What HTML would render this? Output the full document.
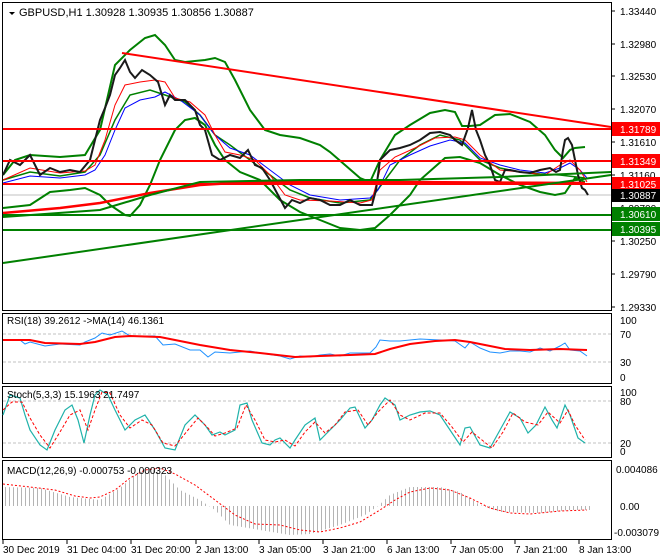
<!DOCTYPE html>
<html><head><meta charset="utf-8"><style>
body{margin:0;background:#fff;width:660px;height:560px;overflow:hidden}
svg{display:block;font-family:"Liberation Sans",sans-serif;font-size:10px}
</style></head><body>
<svg width="660" height="560" viewBox="0 0 660 560">
<defs>
<pattern id="hb" width="4" height="10" patternUnits="userSpaceOnUse"><rect x="1" y="0" width="1" height="10" fill="#b4b4b4"/></pattern>
</defs>
<rect width="660" height="560" fill="#fff"/>
<!-- frames -->
<g fill="none" stroke="#000" stroke-width="1">
<rect x="2.5" y="2.5" width="609" height="308"/>
<rect x="2.5" y="313.5" width="609" height="70"/>
<rect x="2.5" y="386.5" width="609" height="71"/>
<rect x="2.5" y="460.5" width="609" height="79"/>
</g>
<!-- main panel -->
<g>
<line x1="3" y1="195" x2="611" y2="195" stroke="#c0c0c0"/>
<!-- bollinger -->
<polyline fill="none" stroke="#008000" stroke-width="2" points="3,175 15,160 30,155 60,157 85,155 100,130 115,65 130,50 145,38 155,35 165,45 175,60 185,62 205,60 215,58 225,62 235,80 250,110 265,130 280,135 300,138 320,145 330,152 345,165 360,178 370,182 380,160 395,135 410,125 430,113 445,110 455,112 462,126 470,126 480,125 495,115 510,114 530,122 545,135 555,150 563,158 570,150 575,148 585,147"/>
<polyline fill="none" stroke="#008000" stroke-width="2" points="3,208 30,205 50,192 70,190 85,188 100,195 110,205 125,215 130,216 140,205 150,185 160,160 175,130 185,120 195,118 205,125 215,145 225,160 240,172 260,180 280,200 300,212 320,220 340,228 360,230 375,228 390,215 410,195 420,180 445,158 460,157 480,163 500,175 520,185 540,192 555,195 565,193 575,178 585,182"/>
<polyline fill="none" stroke="#008000" stroke-width="1.5" points="3,180 30,172 60,176 85,172 100,155 115,120 130,95 150,90 165,95 185,102 200,115 215,135 230,145 250,160 270,175 290,190 310,198 340,203 370,200 385,180 400,160 420,145 440,135 460,140 480,160 500,168 520,172 540,174 560,175 585,178"/>
<!-- MAs -->
<polyline fill="none" stroke="#0000ff" stroke-width="1" points="3,183 30,176 60,178 85,175 95,170 105,155 115,130 125,108 140,100 155,97 165,92 180,100 200,115 215,135 230,148 250,155 270,170 290,185 310,195 340,200 370,198 378,190 390,165 410,155 430,146 450,140 465,143 480,158 500,165 520,170 545,173 560,168 570,163 580,170 587,178"/>
<polyline fill="none" stroke="#ff0000" stroke-width="1" points="3,180 30,168 60,173 85,171 95,165 105,140 115,105 125,85 140,82 155,80 165,82 175,98 190,102 205,115 215,135 225,152 240,155 255,160 270,175 285,195 300,200 330,201 360,203 372,200 380,170 395,157 415,148 435,138 455,137 465,140 480,155 500,170 520,172 545,175 560,165 570,160 580,170 587,182"/>
<!-- price -->
<polyline fill="none" stroke="#1a1a1a" stroke-width="2" points="3,175 10,160 20,165 30,155 40,175 50,168 60,172 70,170 80,172 90,160 95,140 100,120 105,108 110,95 115,75 120,68 125,60 130,72 135,78 142,70 150,75 158,82 165,105 170,95 175,100 185,100 195,110 200,125 205,130 212,155 220,160 230,155 240,158 248,150 255,165 262,168 270,180 278,195 285,208 292,200 300,203 310,198 320,200 330,205 340,205 350,200 360,205 372,205 376,190 380,160 385,155 390,150 400,148 410,145 420,140 430,133 440,132 450,135 455,140 462,145 468,128 472,110 476,130 480,140 485,155 490,165 495,180 500,182 505,170 510,170 520,172 530,173 540,170 550,168 556,172 560,170 563,150 565,140 568,138 572,145 575,160 578,175 582,188 585,190 588,195"/>
<!-- lines -->
<line x1="122" y1="53" x2="611" y2="127" stroke="#ff0000" stroke-width="2"/>
<line x1="3" y1="129" x2="611" y2="129" stroke="#ff0000" stroke-width="2"/>
<line x1="3" y1="161" x2="611" y2="161" stroke="#ff0000" stroke-width="2"/>
<line x1="3" y1="184" x2="611" y2="184" stroke="#ff0000" stroke-width="2"/>
<polyline fill="none" stroke="#ff0000" stroke-width="2.5" points="3,213 60,208 100,203 150,193 200,185 250,182 400,182 585,183"/>
<polyline fill="none" stroke="#008000" stroke-width="2" points="3,217 100,210 150,195 200,182 300,180 400,180 500,177 611,172"/>
<line x1="3" y1="215" x2="611" y2="215" stroke="#008000" stroke-width="2"/>
<line x1="3" y1="230" x2="611" y2="230" stroke="#008000" stroke-width="2"/>
<line x1="3" y1="263" x2="611" y2="175" stroke="#008000" stroke-width="2"/>
<path d="M9 12l3 3 3-3z" fill="#000"/>
<text x="19" y="16" font-size="11">GBPUSD,H1  1.30928 1.30935 1.30856 1.30887</text>
</g>
<!-- price axis -->
<g font-size="10" fill="#000">
<g stroke="#000"><line x1="611" y1="11" x2="615" y2="11"/><line x1="611" y1="44" x2="615" y2="44"/><line x1="611" y1="76" x2="615" y2="76"/><line x1="611" y1="109" x2="615" y2="109"/><line x1="611" y1="142" x2="615" y2="142"/><line x1="611" y1="175" x2="615" y2="175"/><line x1="611" y1="241" x2="615" y2="241"/><line x1="611" y1="274" x2="615" y2="274"/><line x1="611" y1="307" x2="615" y2="307"/></g>
<text x="620" y="15">1.33440</text><text x="620" y="48">1.32980</text><text x="620" y="80">1.32530</text><text x="620" y="113">1.32070</text><text x="620" y="146">1.31610</text><text x="620" y="179">1.31160</text><text x="620" y="212">1.30700</text><text x="620" y="245">1.30250</text><text x="620" y="278">1.29790</text><text x="620" y="311">1.29330</text>
<rect x="612" y="122" width="48" height="14" fill="#ff0000"/><text x="620" y="133" fill="#fff">1.31789</text>
<rect x="612" y="154" width="48" height="14" fill="#ff0000"/><text x="620" y="165" fill="#fff">1.31349</text>
<rect x="612" y="177" width="48" height="13" fill="#ff0000"/><text x="620" y="188" fill="#fff">1.31025</text>
<rect x="612" y="189" width="48" height="13" fill="#000"/><text x="620" y="199" fill="#fff">1.30887</text>
<rect x="612" y="207" width="48" height="14" fill="#008000"/><text x="620" y="218" fill="#fff">1.30610</text>
<rect x="612" y="222" width="48" height="14" fill="#008000"/><text x="620" y="233" fill="#fff">1.30395</text>
</g>
<!-- RSI -->
<g>
<line x1="3" y1="334" x2="611" y2="334" stroke="#c0c0c0" stroke-dasharray="3,2"/>
<line x1="3" y1="362" x2="611" y2="362" stroke="#c0c0c0" stroke-dasharray="3,2"/>
<polyline fill="none" stroke="#1e90ff" stroke-width="1" points="3,340 20,340 25,344 30,342 45,346 60,344 80,345 85,342 95,338 102,333 110,335 122,331 130,336 140,336 155,336 163,345 175,344 190,350 200,350 208,357 215,352 230,353 250,351 260,353 280,356 290,359 300,356 310,357 320,355 330,354 340,356 350,353 370,353 376,347 380,340 390,341 400,341 410,340 420,339 440,340 455,341 465,348 470,342 480,348 490,352 500,353 510,351 520,351 530,352 540,348 550,351 560,346 565,343 570,350 580,351 587,356"/>
<polyline fill="none" stroke="#ff0000" stroke-width="2" points="3,340 30,340 45,343 80,344 95,342 115,337 130,336 160,337 175,340 200,345 230,350 260,353 295,357 320,356 350,355 375,354 390,349 410,344 435,341 455,340 470,342 485,345 505,349 530,350 560,349 587,350"/>
<text x="7" y="324" font-size="10">RSI(18) 39.2612  -&gt;MA(14) 46.1361</text>
<text x="620" y="324">100</text><text x="620" y="338">70</text><text x="620" y="366">30</text><text x="620" y="381">0</text>
</g>
<!-- Stoch -->
<g>
<line x1="3" y1="401" x2="611" y2="401" stroke="#c0c0c0" stroke-dasharray="3,2"/>
<line x1="3" y1="443" x2="611" y2="443" stroke="#c0c0c0" stroke-dasharray="3,2"/>
<polyline fill="none" stroke="#20b2aa" stroke-width="1.2" points="3,415 10,395 20,398 25,415 30,430 40,445 47,450 55,430 65,410 72,405 78,420 84,443 90,415 95,395 100,390 108,395 115,410 125,430 135,420 145,415 155,430 165,448 175,450 185,425 195,415 205,425 212,435 220,432 225,435 235,430 240,405 247,403 252,420 262,443 270,445 275,440 280,438 290,448 295,440 305,425 315,418 320,440 330,430 340,420 350,408 355,407 365,428 372,420 380,405 385,398 395,405 400,420 410,415 420,412 430,411 440,415 450,430 460,445 465,428 470,427 480,445 490,448 500,430 510,412 520,418 528,433 536,425 545,407 552,420 557,428 565,405 570,415 578,438 585,443"/>
<polyline fill="none" stroke="#ff0000" stroke-width="1" stroke-dasharray="3,2" points="3,410 12,402 22,402 30,418 40,435 50,448 60,432 70,415 80,410 88,430 95,410 102,392 110,393 120,415 130,428 142,420 152,425 163,443 175,446 188,430 198,418 208,428 215,436 225,433 237,428 246,405 255,420 265,440 275,442 285,440 295,446 305,432 315,422 325,433 335,425 345,412 358,410 368,425 378,412 390,400 400,415 410,420 425,413 440,413 452,427 463,442 472,432 482,440 492,448 503,432 513,413 525,422 538,425 548,412 560,423 568,410 575,425 585,440"/>
<text x="7" y="398" font-size="10">Stoch(5,3,3) 15.1963 21.7497</text>
<text x="620" y="396">100</text><text x="620" y="405">80</text><text x="620" y="447">20</text><text x="620" y="455">0</text>
</g>
<!-- MACD -->
<g>
<path d="M3 487 L40 488 L70 497 L100 500 L120 488 L135 475 L150 468 L165 475 L180 490 L200 500 L215 510 L230 525 L260 530 L290 535 L310 534 L340 525 L365 515 L378 506 L390 495 L410 487 L440 487 L460 492 L480 505 L500 512 L540 513 L570 510 L590 510 L590 506 L3 506 Z" fill="url(#hb)"/>
<polyline fill="none" stroke="#ff0000" stroke-width="1" stroke-dasharray="2,2" points="3,484 30,487 55,490 75,496 90,498 100,497 115,490 130,478 145,470 160,468 175,474 195,485 215,500 235,515 255,524 280,525 300,530 320,532 340,528 360,522 380,510 395,500 410,492 430,488 450,490 470,498 490,508 510,513 530,514 560,511 587,510"/>
<text x="7" y="474" font-size="10">MACD(12,26,9) -0.000753 -0.000323</text>
<text x="616" y="473">0.004086</text><text x="620" y="510">0.00</text><text x="614" y="536">-0.003079</text>
</g>
<!-- time axis -->
<g stroke="#000"><line x1="3" y1="540" x2="3" y2="544"/><line x1="67" y1="540" x2="67" y2="544"/><line x1="131" y1="540" x2="131" y2="544"/><line x1="196" y1="540" x2="196" y2="544"/><line x1="259" y1="540" x2="259" y2="544"/><line x1="323" y1="540" x2="323" y2="544"/><line x1="387" y1="540" x2="387" y2="544"/><line x1="451" y1="540" x2="451" y2="544"/><line x1="515" y1="540" x2="515" y2="544"/><line x1="579" y1="540" x2="579" y2="544"/></g>
<g font-size="10"><text x="3" y="553">30 Dec 2019</text><text x="67" y="553">31 Dec 04:00</text><text x="131" y="553">31 Dec 20:00</text><text x="196" y="553">2 Jan 13:00</text><text x="259" y="553">3 Jan 05:00</text><text x="323" y="553">3 Jan 21:00</text><text x="387" y="553">6 Jan 13:00</text><text x="451" y="553">7 Jan 05:00</text><text x="515" y="553">7 Jan 21:00</text><text x="579" y="553">8 Jan 13:00</text></g>
</svg>
</body></html>
